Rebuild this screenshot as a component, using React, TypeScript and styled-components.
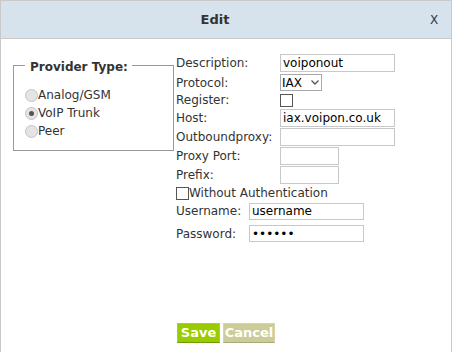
import React from 'react';
import styled, { createGlobalStyle } from 'styled-components';

const GlobalStyle = createGlobalStyle`
  html, body {
    margin: 0;
    background: #fff;
    overflow: hidden;
  }
  body {
    font-family: "DejaVu Sans", Verdana, sans-serif;
    font-size: 12px;
    color: #333;
  }
`;

const Dialog = styled.div`
  width: 452px;
  height: 360px;
  box-sizing: border-box;
  border: 1px solid #c9c9c9;
  border-bottom: none;
  background: #fff;
`;

const Header = styled.div`
  display: flex;
  align-items: center;
  height: 37px;
  background: #d6e2ec;
  border-bottom: 1px solid #c9c9c9;
`;

const Title = styled.div`
  flex: 1;
  text-align: center;
  font-weight: bold;
  font-size: 13px;
  color: #333;
`;

const Close = styled.div`
  width: 21px;
  padding-left: 1px;
  font-size: 12px;
  color: #2d3a4a;
  cursor: pointer;
`;

const Body = styled.div`
  display: flex;
  align-items: flex-start;
  padding: 13px 0 0 12px;
`;

const TypeBox = styled.fieldset`
  box-sizing: border-box;
  width: 161px;
  margin: 4px 0 0 0;
  padding: 11px 0 10px 11px;
  border: 1px solid #999;
`;

const Legend = styled.legend`
  padding: 4px 4px 0 5px;
  font-weight: bold;
  font-size: 12px;
  line-height: 15px;
  color: #333;
`;

const RadioRow = styled.label`
  display: flex;
  align-items: center;
  height: 18px;
  color: #333;
`;

const Radio = styled.input.attrs({ type: 'radio' })`
  appearance: none;
  margin: 0;
  width: 13px;
  height: 13px;
  box-sizing: border-box;
  border-radius: 50%;
  border: 1px solid #c4c4c4;
  background: #e4e4e4;
  display: grid;
  place-items: center;

  &:checked::after {
    content: '';
    width: 5px;
    height: 5px;
    border-radius: 50%;
    background: #555;
  }
`;

const Form = styled.div`
  margin-left: 2px;
  padding-top: 1px;
  display: flex;
  flex-direction: column;
`;

const Row = styled.div<{ $h: number; $cols?: string }>`
  display: grid;
  grid-template-columns: ${p => p.$cols ?? '104px auto'};
  align-items: center;
  height: ${p => p.$h}px;
`;

const Label = styled.span`
  color: #333;
  white-space: nowrap;
`;

const TextInput = styled.input<{ $w: number; $h?: number }>`
  box-sizing: border-box;
  width: ${p => p.$w}px;
  height: ${p => p.$h ?? 18}px;
  margin: 0;
  padding: 0 2px;
  border: 1px solid #c8c8c8;
  font-family: "DejaVu Sans", Verdana, sans-serif;
  font-size: 12px;
  color: #000;
  outline: none;
`;

const SelectWrap = styled.div`
  position: relative;
  width: 42px;
  height: 17px;
`;

const Select = styled.select`
  appearance: none;
  box-sizing: border-box;
  width: 42px;
  height: 17px;
  margin: 0;
  padding: 0 0 0 1px;
  border: 1px solid #a9a9a9;
  border-radius: 0;
  background: #fff;
  font-family: "DejaVu Sans", Verdana, sans-serif;
  font-size: 12px;
  color: #000;
`;

const Chevron = styled.svg`
  position: absolute;
  right: 3px;
  top: 6px;
  pointer-events: none;
`;

const Check = styled.input.attrs({ type: 'checkbox' })`
  appearance: none;
  margin: 0;
  width: 13px;
  height: 13px;
  box-sizing: border-box;
  border: 1px solid #555;
  background: #fff;
`;

const CheckLabel = styled.label`
  grid-column: 1 / span 2;
  display: flex;
  align-items: center;
  color: #333;
`;

const Actions = styled.div`
  display: flex;
  gap: 3px;
  margin: 77px 0 0 1px;
`;

const Button = styled.button<{ $kind: 'save' | 'cancel' }>`
  width: ${p => (p.$kind === 'save' ? 43 : 52)}px;
  height: 20px;
  margin: 0;
  padding: 0;
  text-align: center;
  border: 1px solid;
  border-color: ${p => (p.$kind === 'save' ? '#a6d41a #a6d41a #6f9a00 #a6d41a' : '#d6d6ae #d6d6ae #a9a97c #d6d6ae')};
  background: ${p => (p.$kind === 'save' ? '#99cc00' : '#cccc99')};
  color: #fff;
  font-family: "DejaVu Sans", Verdana, sans-serif;
  font-weight: bold;
  font-size: 13px;
  line-height: 18px;
  cursor: pointer;
`;

export default function App() {
  return (
    <>
      <GlobalStyle />
      <Dialog>
        <Header>
          <Title>Edit</Title>
          <Close>X</Close>
        </Header>
        <Body>
          <TypeBox>
            <Legend>Provider Type:</Legend>
            <RadioRow>
              <Radio name="ptype" />
              Analog/GSM
            </RadioRow>
            <RadioRow>
              <Radio name="ptype" defaultChecked />
              VoIP Trunk
            </RadioRow>
            <RadioRow>
              <Radio name="ptype" />
              Peer
            </RadioRow>
          </TypeBox>
          <Form>
            <Row $h={20}>
              <Label>Description:</Label>
              <TextInput $w={115} defaultValue="voiponout" />
            </Row>
            <Row $h={19}>
              <Label>Protocol:</Label>
              <SelectWrap>
                <Select defaultValue="IAX">
                  <option>SIP</option>
                  <option>IAX</option>
                </Select>
                <Chevron width="8" height="5" viewBox="0 0 8 5">
                  <path d="M0.5 0.5 L4 4 L7.5 0.5" fill="none" stroke="#555" strokeWidth="1.3" />
                </Chevron>
              </SelectWrap>
            </Row>
            <Row $h={16}>
              <Label>Register:</Label>
              <Check />
            </Row>
            <Row $h={20}>
              <Label>Host:</Label>
              <TextInput $w={115} defaultValue="iax.voipon.co.uk" />
            </Row>
            <Row $h={18}>
              <Label>Outboundproxy:</Label>
              <TextInput $w={115} />
            </Row>
            <Row $h={19}>
              <Label>Proxy Port:</Label>
              <TextInput $w={59} />
            </Row>
            <Row $h={20}>
              <Label>Prefix:</Label>
              <TextInput $w={59} />
            </Row>
            <Row $h={16}>
              <CheckLabel>
                <Check />
                Without Authentication
              </CheckLabel>
            </Row>
            <Row $h={20} $cols="73px auto">
              <Label>Username:</Label>
              <TextInput $w={115} $h={17} defaultValue="username" />
            </Row>
            <Row $h={25} $cols="73px auto">
              <Label>Password:</Label>
              <TextInput $w={115} $h={17} type="password" defaultValue="secret" />
            </Row>
            <Actions>
              <Button $kind="save">Save</Button>
              <Button $kind="cancel">Cancel</Button>
            </Actions>
          </Form>
        </Body>
      </Dialog>
    </>
  );
}
